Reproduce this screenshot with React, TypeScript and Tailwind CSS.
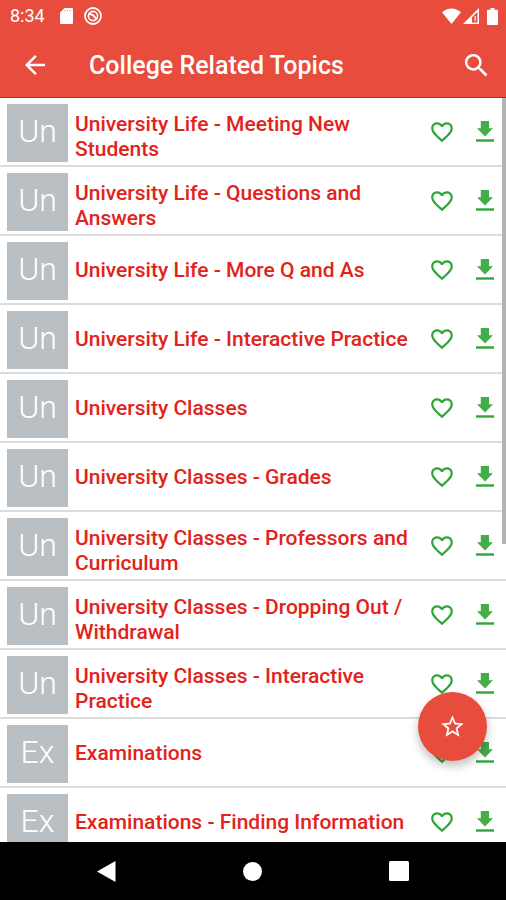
import { MdArrowBack, MdFavoriteBorder, MdSearch, MdStarBorder } from 'react-icons/md';

interface TopicRowProps {
  title: string;
}

const topics = [
  'University Life - Meeting New Students',
  'University Life - Questions and Answers',
  'University Life - More Q and As',
  'University Life - Interactive Practice',
  'University Classes',
  'University Classes - Grades',
  'University Classes - Professors and Curriculum',
  'University Classes - Dropping Out / Withdrawal',
  'University Classes - Interactive Practice',
  'Examinations',
  'Examinations - Finding Information',
];

function DownloadIcon() {
  return (
    <svg className="w-[18px] h-[21px]" viewBox="0 0 18 21" aria-hidden="true">
      <path d="M4.800 0h8.200v7.200h4L9 15.500 1 7.200h3.800z" fill="#43ad48" />
      <path d="M0 18.300h18v2.400H0z" fill="#2fa637" />
    </svg>
  );
}

function StatusBar() {
  return (
    <div className="flex items-center h-8 pl-[10px] pr-2 text-white">
      <span className="text-[18px] leading-6">8:34</span>
      <svg className="w-[13px] h-4 ml-[15px]" viewBox="0 0 13 16" aria-hidden="true">
        <path d="M4.5 0H12a1 1 0 0 1 1 1v14a1 1 0 0 1-1 1H1a1 1 0 0 1-1-1V4.500z" fill="white" />
        <path d="M5 2v1.500M7.500 2v1.500M10 2v1.500" stroke="#e74c3c" strokeWidth="1" opacity="0.6" />
      </svg>
      <svg className="w-[18px] h-[18px] ml-[11px]" viewBox="0 0 18 18" fill="none" stroke="white" aria-hidden="true">
        <circle cx="9" cy="9" r="8" strokeWidth="1.800" />
        <circle cx="9" cy="9" r="4.600" strokeWidth="1.600" />
        <path d="M4.500 6.500L9 8l4 4.500" strokeWidth="2" />
      </svg>
      <div className="flex items-center ml-auto">
        <svg className="w-[19px] h-4" viewBox="0 0 19 16" aria-hidden="true">
          <path d="M9.500 16L0 4.200C2.800 1.700 6 .4 9.500.4S16.200 1.700 19 4.200z" fill="white" />
        </svg>
        <svg className="w-4 h-4 ml-[2px]" viewBox="0 0 16 16" aria-hidden="true">
          <path d="M16 0v16H0zM14.500 3.800l-5.500 5.500v5.200h5.500z" fill="white" fillRule="evenodd" />
          <path d="M12.200 8v5" stroke="white" strokeWidth="1.200" />
        </svg>
        <svg className="w-[11px] h-[17px] ml-2" viewBox="0 0 11 17" aria-hidden="true">
          <path d="M3.500 0h4v1.800H10a1 1 0 0 1 1 1V16a1 1 0 0 1-1 1H1a1 1 0 0 1-1-1V2.800a1 1 0 0 1 1-1h2.500z" fill="white" />
        </svg>
      </div>
    </div>
  );
}

function TopicRow({ title }: TopicRowProps) {
  return (
    <li className="flex items-center h-[69px] shrink-0 pt-[2px] pl-[7px] pr-3 border-b-2 border-[#dcdcdc]">
      <div className="flex items-center justify-center w-[61px] h-[58px] shrink-0 bg-[#b9bfc2] text-white text-[32px] leading-9 font-light pb-1">
        {title.slice(0, 2)}
      </div>
      {/* two-line titles start at the top of the box and run past its bottom */}
      <div className="flex [align-items:safe_center] flex-1 min-w-0 h-[41px] ml-[7px]">
        <a href="#topic" className="text-[21px] leading-[25px] font-medium text-[#e1231b]">
          {title}
        </a>
      </div>
      <button type="button" aria-label={`Add ${title} to favorites`} className="ml-2 mr-[21px] pb-[2px] shrink-0">
        <MdFavoriteBorder className="w-[26px] h-[26px] text-[#2fa637]" />
      </button>
      <button type="button" aria-label={`Download ${title}`} className="pb-[2px] shrink-0">
        <DownloadIcon />
      </button>
    </li>
  );
}

export default function App() {
  return (
    <div className="relative flex flex-col h-screen bg-white font-['Roboto',sans-serif]">
      <header className="shrink-0 h-[98px] bg-[#e74c3c] border-b border-[#dc1414] text-white">
        <StatusBar />
        <div className="flex items-center h-[66px] pl-5 pr-[14px]">
          <button type="button" aria-label="Back">
            <MdArrowBack className="w-[30px] h-[30px]" />
          </button>
          <h1 className="flex-1 ml-[39px] pt-[2px] text-[25px] leading-8 font-medium">College Related Topics</h1>
          <button type="button" aria-label="Search">
            <MdSearch className="w-[31px] h-[31px]" />
          </button>
        </div>
      </header>

      <main className="relative flex-1 min-h-0 overflow-hidden">
        <ul className="flex flex-col">
          {topics.map((title) => (
            <TopicRow key={title} title={title} />
          ))}
        </ul>
        {/* scroll indicator */}
        <div className="absolute top-0 right-0 w-1 h-3/5 bg-[#b4b4b4]" />
        <button
          type="button"
          aria-label="Favorites"
          className="absolute right-[19px] bottom-[81px] flex items-center justify-center w-[69px] h-[69px] rounded-full bg-[#e74c3c] text-white shadow-[0_5px_10px_rgba(0,0,0,0.25)]"
        >
          <MdStarBorder className="w-[27px] h-[27px]" />
        </button>
      </main>

      <nav className="flex items-center justify-center gap-[127px] shrink-0 h-[58px] bg-black text-white">
        <button type="button" aria-label="Navigate back">
          <svg className="w-[19px] h-[21px]" viewBox="0 0 19 21" fill="currentColor">
            <path d="M18.500 0v21L0 10.500z" />
          </svg>
        </button>
        <button type="button" aria-label="Home">
          <svg className="w-[19px] h-[19px]" viewBox="0 0 19 19" fill="currentColor">
            <circle cx="9.500" cy="9.500" r="9.500" />
          </svg>
        </button>
        <button type="button" aria-label="Recent apps">
          <svg className="w-5 h-5" viewBox="0 0 20 20" fill="currentColor">
            <rect width="20" height="20" rx="1.500" />
          </svg>
        </button>
      </nav>
    </div>
  );
}
